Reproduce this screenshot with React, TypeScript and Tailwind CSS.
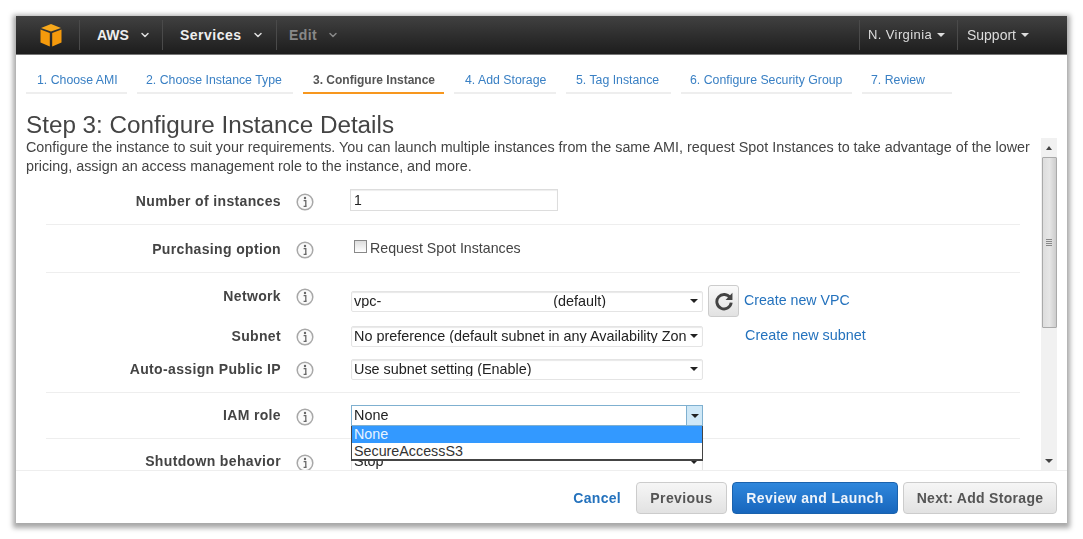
import { ChevronDown } from "lucide-react";

const tabs = [
  { label: "1. Choose AMI", width: "w-[101px] pl-[11px]" },
  { label: "2. Choose Instance Type", width: "w-[156px] pl-[9px]" },
  { label: "3. Configure Instance", width: "w-[141px] pl-[10px]", active: true },
  { label: "4. Add Storage", width: "w-[102px] pl-[11px]" },
  { label: "5. Tag Instance", width: "w-[105px] pl-[10px]" },
  { label: "6. Configure Security Group", width: "w-[171px] pl-[9px]" },
  { label: "7. Review", width: "w-[90px] pl-[9px]" },
];

function CubeLogo() {
  return (
    <svg width="22" height="23" viewBox="0 0 22 23">
      <path d="M11 0 L21 4 L11 7.5 L1 4 Z" fill="#f7a81b" />
      <path d="M0.5 5.5 L9.8 9 V22.5 L0.5 18.5 Z" fill="#f59a0c" />
      <path d="M21.5 5.5 L12.2 9 V22.5 L21.5 18.5 Z" fill="#f59a0c" />
    </svg>
  );
}

function InfoIcon() {
  return (
    <svg width="18" height="18" viewBox="0 0 18 18" className="shrink-0">
      <circle cx="9" cy="9" r="7.8" fill="#fafafa" stroke="#a8a8a8" strokeWidth="1.5" />
      <circle cx="9" cy="5" r="1.2" fill="#666" />
      <path d="M7.6 7.6 H9.8 V13 H10.6 M7.6 13.4 H10.6" fill="none" stroke="#666" strokeWidth="1.3" />
    </svg>
  );
}

function Caret({ color = "#222" }: { color?: string }) {
  return <span className="h-0 w-0 border-x-[4px] border-t-[4px] border-x-transparent" style={{ borderTopColor: color }} />;
}

function Select({ children, focused }: { children: React.ReactNode; focused?: boolean }) {
  return (
    <div
      className={`ml-[1px] flex h-[21px] w-[352px] items-center justify-between border pl-[2px] text-[14.4px] leading-none text-[#222] ${
        focused ? "border-[#7fb0d0] pr-0" : "rounded-[2px] border-[#e4e4e4] pr-[4px] shadow-[inset_0_1px_1px_#e8e8e8]"
      }`}
    >
      <div className="w-[332px] overflow-hidden whitespace-nowrap">{children}</div>
      {focused ? (
        <span className="flex h-full w-[16px] items-center justify-center border-l border-[#7fb0d0] bg-[#cfe8f7]">
          <Caret />
        </span>
      ) : (
        <Caret />
      )}
    </div>
  );
}

function Row({
  label,
  height,
  labelClass = "",
  iconClass = "mt-[2px]",
  children,
}: {
  label: string;
  height: string;
  labelClass?: string;
  iconClass?: string;
  children?: React.ReactNode;
}) {
  return (
    <div className={`flex items-center ${height}`}>
      <div className={`w-[235px] text-right text-[14px] font-bold tracking-[0.35px] text-[#444] ${labelClass}`}>{label}</div>
      <div className={`ml-[15px] mr-[36px] flex w-[18px] justify-center ${iconClass}`}>
        <InfoIcon />
      </div>
      {children}
    </div>
  );
}

export default function App() {
  return (
    <div className="h-[539px] w-[1083px] overflow-hidden bg-white pl-[16px] pt-[16px] font-['Liberation_Sans',Arial,sans-serif]">
      <div className="flex h-[507px] w-[1051px] flex-col bg-white shadow-[0_2px_5px_3px_rgba(0,0,0,0.35)] blur-[0.35px]">
        {/* top bar */}
        <div className="flex h-[39px] shrink-0 items-center justify-between border-b border-[#777] bg-gradient-to-b from-[#414141] to-[#1d1d1d]">
          <div className="flex h-full items-center">
            <div className="flex h-[30px] w-[64px] items-center justify-end border-r border-[#4a4a4a] pr-[17px]">
              <CubeLogo />
            </div>
            <div className="flex h-[30px] w-[83px] items-center border-r border-[#4a4a4a] pl-[17px] text-[14px] font-bold text-[#eee]">
              AWS
              <ChevronDown size={12} strokeWidth={3} className="ml-[10px] text-[#ddd]" />
            </div>
            <div className="flex h-[30px] w-[114px] items-center border-r border-[#4a4a4a] pl-[17px] text-[14px] font-bold tracking-[0.5px] text-[#eee]">
              Services
              <ChevronDown size={12} strokeWidth={3} className="ml-[10px] text-[#ddd]" />
            </div>
            <div className="flex items-center pl-[12px] text-[14px] font-bold tracking-[0.4px] text-[#888]">
              Edit
              <ChevronDown size={12} strokeWidth={3} className="ml-[10px] text-[#888]" />
            </div>
          </div>
          <div className="flex h-full items-center pr-[38px]">
            <div className="flex h-[30px] w-[98px] items-center gap-[5px] border-l border-[#4a4a4a] pl-[8px] text-[13px] tracking-[0.4px] text-[#ddd]">
              N. Virginia
              <Caret color="#ddd" />
            </div>
            <div className="flex h-[30px] items-center gap-[5px] border-l border-[#4a4a4a] pl-[9px] text-[14px] text-[#ddd]">
              Support
              <Caret color="#ddd" />
            </div>
          </div>
        </div>

        {/* wizard tabs */}
        <div className="mt-[13px] flex shrink-0 gap-[10px] pl-[10px]">
          {tabs.map((tab) => (
            <div
              key={tab.label}
              className={`h-[26px] whitespace-nowrap border-b-2 pt-[3px] leading-[18px] ${tab.width} ${
                tab.active ? "border-[#f7971e] text-[12px] font-bold text-[#555]" : "border-[#eee] text-[12.3px] text-[#3a80c4]"
              }`}
            >
              {tab.label}
            </div>
          ))}
        </div>

        <h1 className="mt-[17px] h-[27px] shrink-0 pl-[10px] text-[24.25px] leading-[27px] text-[#444]">Step 3: Configure Instance Details</h1>

        {/* scrolling form */}
        <div className="flex h-[333px] shrink-0 border-b border-[#eee] pl-[10px] pr-[10px]">
          <div className="relative w-[1015px] overflow-hidden">
            <p className="h-[38px] text-[14.35px] leading-[19px] text-[#444]">
              Configure the instance to suit your requirements. You can launch multiple instances from the same AMI, request Spot Instances to take advantage of the lower pricing, assign an access management role to the instance, and more.
            </p>
            <div className="ml-[20px] w-[974px]">
              <div className="border-b border-[#eee]">
                <Row label="Number of instances" height="h-[48px]" labelClass="mt-[2px]" iconClass="mt-[4px]">
                  <div className="flex h-[22px] w-[208px] items-center border border-[#ddd] pl-[3px] text-[14px] text-[#222] shadow-[inset_0_1px_1px_#eee]">1</div>
                </Row>
              </div>
              <div className="border-b border-[#eee]">
                <Row label="Purchasing option" height="h-[47px]" labelClass="mt-[1px]" iconClass="mt-[3px]">
                  <div className="flex items-center text-[14.2px] text-[#444]">
                    <span className="mb-[3px] ml-[4px] h-[13px] w-[13px] border border-[#888] bg-gradient-to-b from-[#ddd] to-white" />
                    <span className="ml-[3px]">Request Spot Instances</span>
                  </div>
                </Row>
              </div>
              <div className="border-b border-[#eee] pb-[8px] pt-[11px]">
                <Row label="Network" height="h-[34px]" labelClass="mb-[10px]" iconClass="mb-[8px]">
                  <Select>
                    vpc-<span className="ml-[172px]">(default)</span>
                  </Select>
                  <div className="ml-[5px] flex h-[32px] w-[31px] items-center justify-center rounded-[3px] border border-[#ccc] bg-gradient-to-b from-[#fafafa] to-[#e2e2e2]">
                    <svg width="20" height="20" viewBox="0 0 18 18">
                      <path d="M14.6 6.2 A6.5 6.5 0 1 0 15.5 10.5" fill="none" stroke="#444" strokeWidth="2.6" />
                      <path d="M16.6 1.6 V8 H10.4 Z" fill="#444" />
                    </svg>
                  </div>
                  <span className="ml-[5px] text-[14.2px] text-[#2472bd]">Create new VPC</span>
                </Row>
                <Row label="Subnet" height="h-[36px]">
                  <Select>No preference (default subnet in any Availability Zone)</Select>
                  <span className="ml-[42px] text-[14.4px] text-[#2472bd]">Create new subnet</span>
                </Row>
                <Row label="Auto-assign Public IP" height="h-[30px]">
                  <Select>Use subnet setting (Enable)</Select>
                </Row>
              </div>
              <div className="border-b border-[#eee]">
                <Row label="IAM role" height="h-[45px]">
                  <div className="relative">
                    <Select focused>None</Select>
                    {/* open dropdown list */}
                    <div className="absolute left-[1px] top-[21px] z-10 w-[352px] border-x border-b-2 border-[#444] bg-white text-[14.3px] leading-[16px] text-[#333]">
                      <div className="h-[17px] bg-[#3399ff] pl-[2px] text-[#e8f4ff]">None</div>
                      <div className="h-[16px] pl-[2px]">SecureAccessS3</div>
                    </div>
                  </div>
                </Row>
              </div>
              <Row label="Shutdown behavior" height="h-[45px]">
                <Select>Stop</Select>
              </Row>
            </div>
          </div>

          {/* scrollbar */}
          <div className="flex h-full w-[16px] flex-col items-center bg-[#f1f1f1]">
            <div className="flex h-[19px] items-center justify-center">
              <span className="h-0 w-0 border-x-[3px] border-b-[4px] border-x-transparent border-b-[#444]" />
            </div>
            <div className="flex h-[171px] w-[15px] flex-col items-center justify-center gap-[1px] rounded-[1px] border border-[#aaa] bg-gradient-to-r from-[#ddd] via-[#e6e6e6] to-[#ccc]">
              <span className="h-[1px] w-[6px] bg-[#888]" />
              <span className="h-[1px] w-[6px] bg-[#888]" />
              <span className="h-[1px] w-[6px] bg-[#888]" />
              <span className="h-[1px] w-[6px] bg-[#888]" />
            </div>
            <div className="mt-auto flex h-[18px] items-center justify-center">
              <Caret color="#444" />
            </div>
          </div>
        </div>

        {/* footer */}
        <div className="mt-[11px] flex shrink-0 items-center justify-end gap-[5px] pr-[10px]">
          <span className="mr-[10px] text-[14px] font-bold tracking-[0.3px] text-[#2472bd]">Cancel</span>
          <button className="h-[32px] w-[91px] rounded-[4px] border border-[#ccc] bg-gradient-to-b from-[#f6f6f6] to-[#e2e2e2] text-[14px] font-bold tracking-[0.4px] text-[#555]">Previous</button>
          <button className="h-[32px] w-[166px] rounded-[4px] border border-[#1a62ad] bg-gradient-to-b from-[#2f87dc] to-[#1766bd] text-[14px] font-bold tracking-[0.4px] text-[#eef4fb]">Review and Launch</button>
          <button className="h-[32px] w-[154px] rounded-[4px] border border-[#ccc] bg-gradient-to-b from-[#f6f6f6] to-[#e2e2e2] text-[14px] font-bold tracking-[0.3px] text-[#555]">Next: Add Storage</button>
        </div>
      </div>
    </div>
  );
}
